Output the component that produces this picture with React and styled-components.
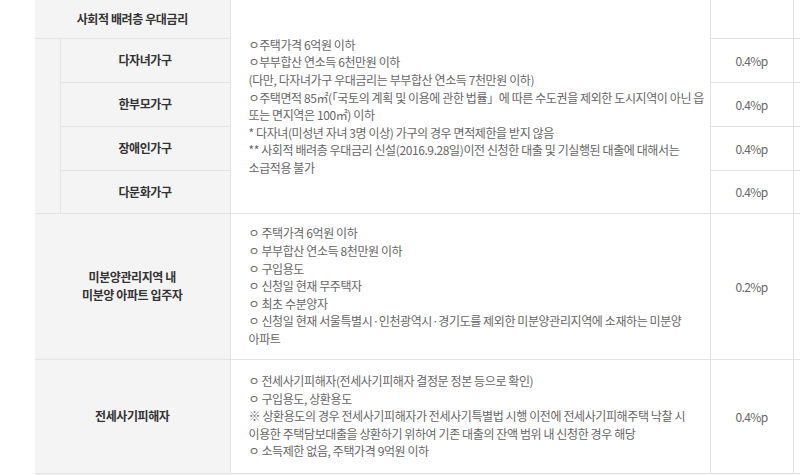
import React from 'react'
import styled, { createGlobalStyle } from 'styled-components'

const GlobalStyle = createGlobalStyle`
  html, body {
    margin: 0;
    padding: 0;
    background: #fff;
    overflow: hidden;
  }
  body {
    font-family: "Noto Sans CJK KR", "Noto Sans", sans-serif;
  }
`

const Page = styled.div`
  padding-left: 35px;
  width: 800px;
`

const Table = styled.table`
  border-collapse: collapse;
  table-layout: fixed;
  width: 800px;
  font-size: 12px;
`

const Row = styled.tr`
  height: ${(p) => p.h}px;
`

const Label = styled.th`
  background: #f4f4f4;
  color: #333;
  font-weight: bold;
  font-size: 12px;
  line-height: 18px;
  letter-spacing: -0.4px;
  text-align: center;
  vertical-align: middle;
  padding: 0;
  border-bottom: 1px solid #e3e3e3;
  border-right: 1px solid #e3e3e3;
`

const Indent = styled.th`
  background: #f4f4f4;
  padding: 0;
  border-right: 1px solid #e3e3e3;
  border-bottom: 1px solid #e3e3e3;
`

const Detail = styled.td`
  background: #fff;
  color: #666;
  padding: 0 0 0 18px;
  vertical-align: middle;
  border-bottom: 1px solid #e3e3e3;
  border-right: 1px solid #e3e3e3;
`

const Line = styled.div`
  white-space: nowrap;
  line-height: 17.6px;
  letter-spacing: -0.4px;
`

const Value = styled.td`
  background: #fff;
  color: #666;
  text-align: center;
  vertical-align: middle;
  padding: 0;
  letter-spacing: -0.6px;
  border-bottom: 1px solid #e3e3e3;
  border-right: 1px solid #e3e3e3;
`

const Spare = styled.td`
  background: #fff;
  border-bottom: 1px solid #e3e3e3;
`

const Band = styled.td`
  background: #f4f4f4;
  padding: 0;
`

const socialLines = [
  'ㅇ주택가격 6억원 이하',
  'ㅇ부부합산 연소득 6천만원 이하',
  '(다만, 다자녀가구 우대금리는 부부합산 연소득 7천만원 이하)',
  'ㅇ주택면적 85㎡(「국토의 계획 및 이용에 관한 법률」에 따른 수도권을 제외한 도시지역이 아닌 읍',
  '또는 면지역은 100㎡) 이하',
  '* 다자녀(미성년 자녀 3명 이상) 가구의 경우 면적제한을 받지 않음',
  '** 사회적 배려층 우대금리 신설(2016.9.28일)이전 신청한 대출 및 기실행된 대출에 대해서는',
  '소급적용 불가',
]

const unsoldLines = [
  'ㅇ 주택가격 6억원 이하',
  'ㅇ 부부합산 연소득 8천만원 이하',
  'ㅇ 구입용도',
  'ㅇ 신청일 현재 무주택자',
  'ㅇ 최초 수분양자',
  'ㅇ 신청일 현재 서울특별시·인천광역시·경기도를 제외한 미분양관리지역에 소재하는 미분양',
  '아파트',
]

const fraudLines = [
  'ㅇ 전세사기피해자(전세사기피해자 결정문 정본 등으로 확인)',
  'ㅇ 구입용도, 상환용도',
  '※ 상환용도의 경우 전세사기피해자가 전세사기특별법 시행 이전에 전세사기피해주택 낙찰 시',
  '이용한 주택담보대출을 상환하기 위하여 기존 대출의 잔액 범위 내 신청한 경우 해당',
  'ㅇ 소득제한 없음, 주택가격 9억원 이하',
]

const groups = ['다자녀가구', '한부모가구', '장애인가구', '다문화가구']

function Lines({ items }) {
  return items.map((t, i) => <Line key={i}>{t}</Line>)
}

export default function App() {
  return (
    <Page>
      <GlobalStyle />
      <Table>
        <colgroup>
          <col style={{ width: 25 }} />
          <col style={{ width: 170 }} />
          <col style={{ width: 480 }} />
          <col style={{ width: 83 }} />
          <col />
        </colgroup>
        <tbody>
          <Row h={38}>
            <Label colSpan={2}>사회적 배려층 우대금리</Label>
            <Detail rowSpan={5}>
              <Lines items={socialLines} />
            </Detail>
            <Value />
            <Spare />
          </Row>
          {groups.map((g, i) => (
            <Row h={i === 3 ? 43 : 44} key={g}>
              {i === 0 && <Indent rowSpan={4} />}
              <Label>{g}</Label>
              <Value>0.4%p</Value>
              <Spare />
            </Row>
          ))}
          <Row h={146}>
            <Label colSpan={2}>
              미분양관리지역 내<br />미분양 아파트 입주자
            </Label>
            <Detail>
              <Lines items={unsoldLines} />
            </Detail>
            <Value>0.2%p</Value>
            <Spare />
          </Row>
          <Row h={114}>
            <Label colSpan={2}>전세사기피해자</Label>
            <Detail>
              <Lines items={fraudLines} />
            </Detail>
            <Value>0.4%p</Value>
            <Spare />
          </Row>
          <Row h={20}>
            <Band colSpan={5} />
          </Row>
        </tbody>
      </Table>
    </Page>
  )
}
